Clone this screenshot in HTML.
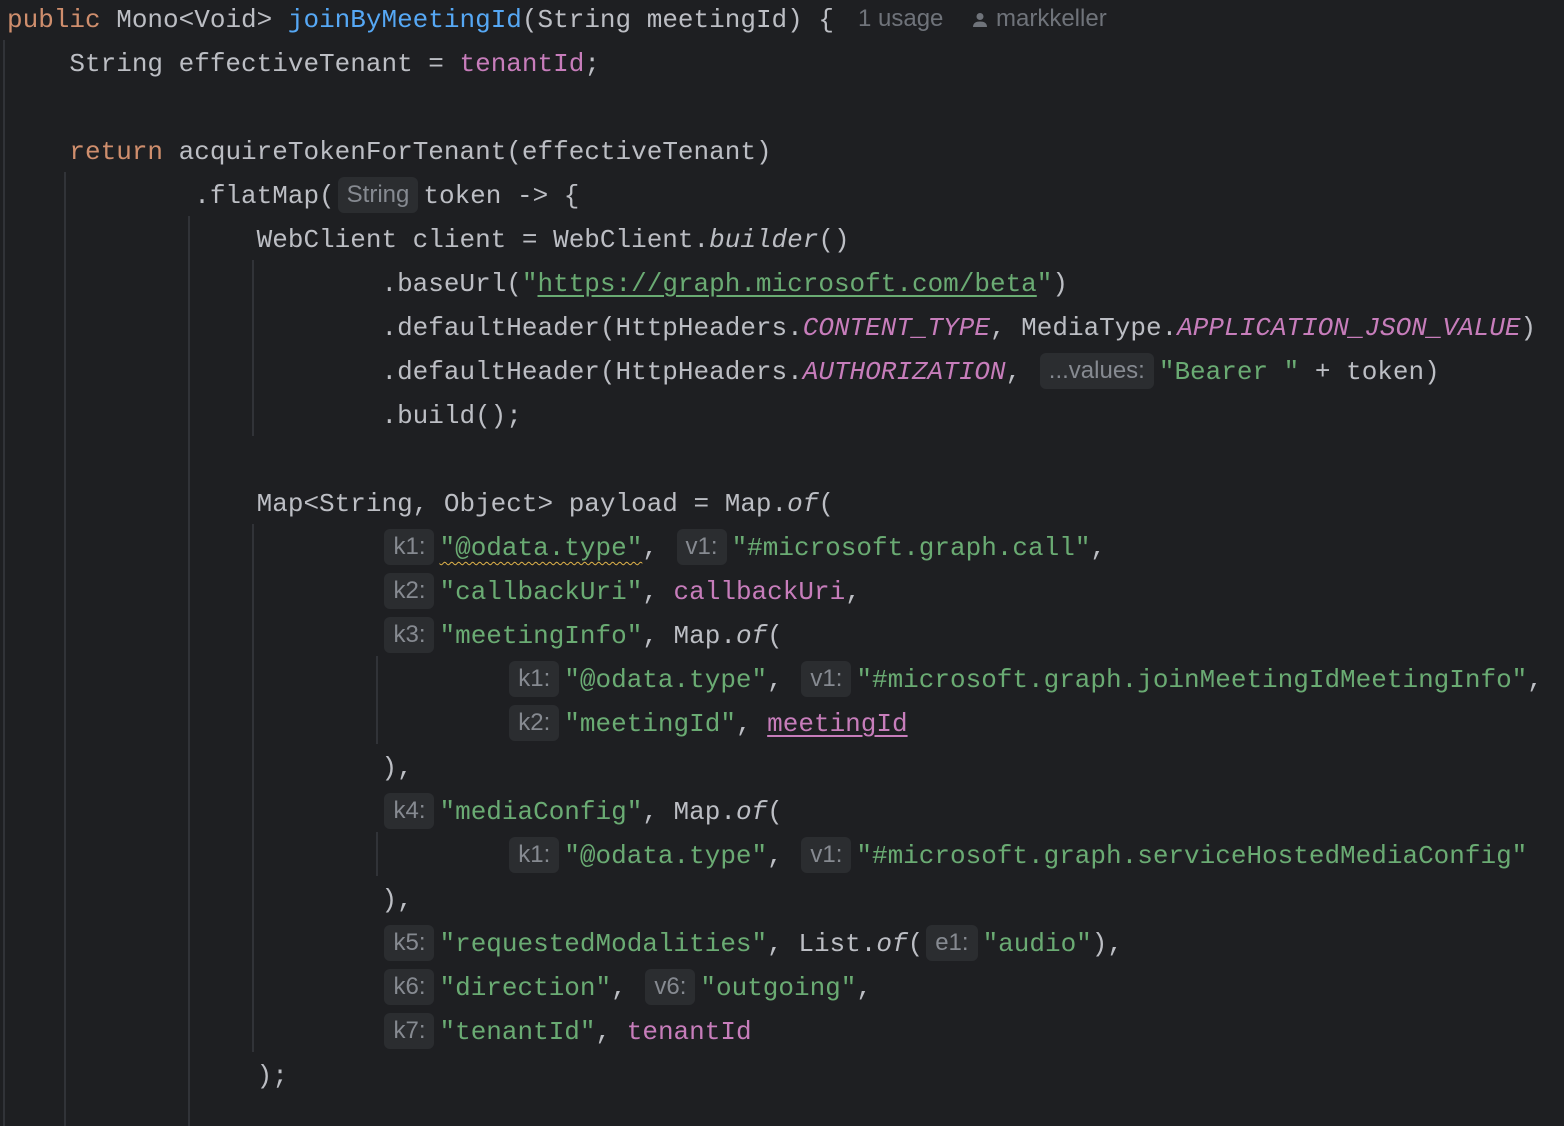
<!DOCTYPE html>
<html><head><meta charset="utf-8"><style>
html,body{margin:0;padding:0;background:#1e1f22;width:1564px;height:1126px;overflow:hidden}
#c{position:absolute;left:7px;top:-2px;font-family:"Liberation Mono",monospace;font-size:26px;line-height:44px;color:#bcbec4}
.l{height:44px;white-space:pre}
.k{color:#cf8e6d}.m{color:#56a8f5}.f{color:#c77dbb}.s{color:#6aab73}.i{font-style:italic}
.h{display:inline-block;font-family:"Liberation Sans",sans-serif;font-size:24px;line-height:36px;height:36px;padding:0 9px;margin:0 5px 0 3px;border-radius:6px;background:#2b2d30;color:#868a91;vertical-align:1px;font-style:normal}
.g{position:absolute;width:2px;background:#313338}
.u{text-decoration:underline;text-underline-offset:4px}
.w{text-decoration:underline wavy #e0b34a;text-underline-offset:6px;text-decoration-thickness:1px}
.meta{position:absolute;top:5px;font-family:"Liberation Sans",sans-serif;font-size:24px;color:#6f737a}
</style></head><body>
<div class="g" style="left:3px;top:40px;height:1086px"></div>
<div class="g" style="left:64px;top:172px;height:954px"></div>
<div class="g" style="left:188px;top:216px;height:910px"></div>
<div class="g" style="left:252px;top:260px;height:176px"></div>
<div class="g" style="left:252px;top:524px;height:528px"></div>
<div class="g" style="left:376px;top:656px;height:88px"></div>
<div class="g" style="left:376px;top:832px;height:44px"></div>
<div class="meta" style="left:858px">1 usage</div>
<svg style="position:absolute;left:971px;top:11px" width="18" height="18" viewBox="0 0 18 18"><circle cx="9" cy="5.5" r="3.5" fill="#6f737a"/><path d="M2 16c0-4 3-5.5 7-5.5s7 1.5 7 5.5z" fill="#6f737a"/></svg>
<div class="meta" style="left:996px">markkeller</div>
<div id="c"><div class="l"><span class="k">public</span> Mono&lt;Void&gt; <span class="m">joinByMeetingId</span>(String meetingId) {</div><div class="l">    String effectiveTenant = <span class="f">tenantId</span>;</div><div class="l"> </div><div class="l">    <span class="k">return</span> acquireTokenForTenant(effectiveTenant)</div><div class="l">            .flatMap(<span class="h">String</span>token -&gt; {</div><div class="l">                WebClient client = WebClient.<span class="i">builder</span>()</div><div class="l">                        .baseUrl(<span class="s">"<span class="u">https://graph.microsoft.com/beta</span>"</span>)</div><div class="l">                        .defaultHeader(HttpHeaders.<span class="f i">CONTENT_TYPE</span>, MediaType.<span class="f i">APPLICATION_JSON_VALUE</span>)</div><div class="l">                        .defaultHeader(HttpHeaders.<span class="f i">AUTHORIZATION</span>, <span class="h">...values:</span><span class="s">"Bearer "</span> + token)</div><div class="l">                        .build();</div><div class="l"> </div><div class="l">                Map&lt;String, Object&gt; payload = Map.<span class="i">of</span>(</div><div class="l">                        <span class="h">k1:</span><span class="s w">"@odata.type"</span>, <span class="h">v1:</span><span class="s">"#microsoft.graph.call"</span>,</div><div class="l">                        <span class="h">k2:</span><span class="s">"callbackUri"</span>, <span class="f">callbackUri</span>,</div><div class="l">                        <span class="h">k3:</span><span class="s">"meetingInfo"</span>, Map.<span class="i">of</span>(</div><div class="l">                                <span class="h">k1:</span><span class="s">"@odata.type"</span>, <span class="h">v1:</span><span class="s">"#microsoft.graph.joinMeetingIdMeetingInfo"</span>,</div><div class="l">                                <span class="h">k2:</span><span class="s">"meetingId"</span>, <span class="f u">meetingId</span></div><div class="l">                        ),</div><div class="l">                        <span class="h">k4:</span><span class="s">"mediaConfig"</span>, Map.<span class="i">of</span>(</div><div class="l">                                <span class="h">k1:</span><span class="s">"@odata.type"</span>, <span class="h">v1:</span><span class="s">"#microsoft.graph.serviceHostedMediaConfig"</span></div><div class="l">                        ),</div><div class="l">                        <span class="h">k5:</span><span class="s">"requestedModalities"</span>, List.<span class="i">of</span>(<span class="h">e1:</span><span class="s">"audio"</span>),</div><div class="l">                        <span class="h">k6:</span><span class="s">"direction"</span>, <span class="h">v6:</span><span class="s">"outgoing"</span>,</div><div class="l">                        <span class="h">k7:</span><span class="s">"tenantId"</span>, <span class="f">tenantId</span></div><div class="l">                );</div></div>
</body></html>
